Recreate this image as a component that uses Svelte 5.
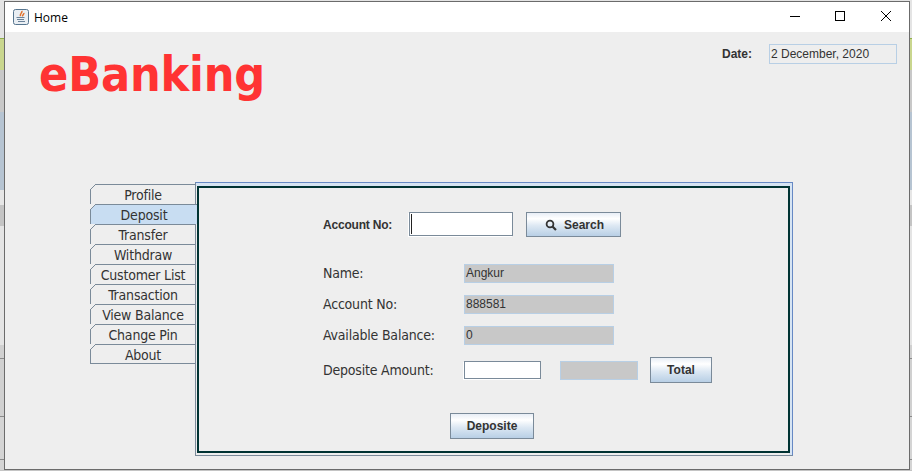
<script>
  const tabs = ['Profile', 'Deposit', 'Transfer', 'Withdraw', 'Customer List', 'Transaction', 'View Balance', 'Change Pin', 'About'];
  const selected = 'Deposit';
  const details = [
    { label: 'Name:', value: 'Angkur' },
    { label: 'Account No:', value: '888581' },
    { label: 'Available Balance:', value: '0' }
  ];
</script>

<div class="desktop">
  <div class="window">
    <div class="titlebar">
      <svg class="app-icon" width="16" height="16" viewBox="0 0 16 16">
        <rect x="0.5" y="0.5" width="15" height="15" rx="2" fill="#e9eef3" stroke="#56758f" />
        <path d="M8.800 1.800c1.200 1.800-2.600 3-1.200 5.400M10.800 4c.6 1.200-1.800 1.800-1.100 3.400" fill="none" stroke="#e2702a" stroke-width="1.500" />
        <path d="M3.500 8.500h8M4 10.500h7M5 12.500h7" stroke="#6a8299" stroke-width="1" />
      </svg>
      <span class="title">Home</span>
      <div class="controls">
        <svg width="102" height="12" viewBox="0 0 102 12">
          <path d="M0 5.500h10" stroke="#000" />
          <rect x="45.500" y="0.500" width="9" height="9" fill="none" stroke="#000" />
          <path d="M91 0l10 10M101 0l-10 10" stroke="#000" />
        </svg>
      </div>
    </div>

    <div class="content">
      <header class="top">
        <h1>eBanking</h1>
        <div class="date">
          <strong>Date:</strong>
          <div class="date-field">2 December, 2020</div>
        </div>
      </header>

      <div class="tabbed">
        <div class="tabs">
          {#each tabs as tab}
            <div class="tab" class:selected={tab === selected}>{tab}</div>
          {/each}
        </div>

        <div class="panel">
          <div class="form">
            <div class="search-row">
              <strong class="search-label">Account No:</strong>
              <div class="input search-input"><span class="caret"></span></div>
              <button class="btn search-btn">
                <svg width="12" height="12" viewBox="0 0 12 12">
                  <circle cx="5" cy="5" r="3.400" fill="none" stroke="#333" stroke-width="1.800" />
                  <path d="M7.500 7.500l3.500 3.500" stroke="#333" stroke-width="2.200" />
                </svg>
                Search
              </button>
            </div>

            <div class="details">
              {#each details as row}
                <div class="detail-row">
                  <span class="label">{row.label}</span>
                  <div class="readonly">{row.value}</div>
                </div>
              {/each}
            </div>

            <div class="amount-row">
              <span class="label">Deposite Amount:</span>
              <div class="input amount-input"></div>
              <div class="readonly total-field"></div>
              <button class="btn total-btn">Total</button>
            </div>

            <button class="btn deposit-btn">Deposite</button>
          </div>
        </div>
      </div>
    </div>
  </div>
</div>

<style>
  :global(body) {
    margin: 0;
    overflow: hidden;
  }

  .desktop {
    width: 912px;
    height: 471px;
    box-sizing: border-box;
    padding: 1px 2px 1px 4px;
    font-family: "Liberation Sans", Arial, sans-serif;
    color: #333;
    background: linear-gradient(
      to bottom,
      #e4e4e4 0 38px,
      #8fb04a 38px 39px,
      #c9d68e 39px 70px,
      #c8c8c8 70px 112px,
      #b6c4d2 112px 190px,
      #e6e6e6 190px 205px,
      #c4c4c4 205px 226px,
      #e4e4e4 226px 345px,
      #d0d0d0 345px 358px,
      #8a8a8a 358px 359px,
      #d0d0d0 359px 416px,
      #8a8a8a 416px 417px,
      #d4d4d4 417px 459px,
      #8a8a8a 459px 460px,
      #d4d4d4 460px 470px,
      #c4c4c4 470px 471px
    );
  }

  .window {
    width: 906px;
    height: 469px;
    box-sizing: border-box;
    border: 1px solid #6b6b6b;
    background: #eeeeee;
    display: flex;
    flex-direction: column;
  }

  .titlebar {
    height: 30px;
    flex: none;
    background: #fff;
    display: flex;
    align-items: center;
    padding-left: 8px;
    font-family: "Open Sans", sans-serif;
    font-size: 12px;
    color: #000;
  }

  .app-icon {
    margin-right: 5px;
  }

  .controls {
    margin-left: auto;
    margin-right: 17px;
    display: flex;
  }

  .controls svg {
    display: block;
  }

  .content {
    flex: 1;
    display: flex;
    flex-direction: column;
  }

  .top {
    height: 150px;
    flex: none;
    display: flex;
    justify-content: space-between;
    align-items: flex-start;
  }

  h1 {
    margin: 9px 0 0 34px;
    font-family: "DejaVu Sans", sans-serif;
    font-stretch: condensed;
    font-size: 48px;
    font-weight: 700;
    line-height: 66px;
    letter-spacing: -0.15px;
    color: #ff3333;
  }

  .date {
    margin: 12px 12px 0 0;
    display: flex;
    align-items: center;
    font-size: 12px;
  }

  .date strong {
    margin-right: 17px;
  }

  .date-field {
    width: 128px;
    height: 20px;
    box-sizing: border-box;
    border: 1px solid #b8cfe5;
    padding: 1px 0 0 1px;
    line-height: 17px;
  }

  .tabbed {
    display: flex;
    margin-left: 85px;
    align-items: flex-start;
  }

  .tabs {
    margin-top: 2px;
    width: 105px;
    flex: none;
    border-bottom: 1px solid #7a8a99;
    position: relative;
    z-index: 1;
  }

  .tab {
    position: relative;
    height: 20px;
    box-sizing: border-box;
    border-top: 1px solid #7a8a99;
    border-left: 1px solid #7a8a99;
    text-align: center;
    font-family: "DejaVu Sans", sans-serif;
    font-stretch: condensed;
    font-size: 14px;
    line-height: 20px;
    letter-spacing: -0.2px;
  }

  .tab::before {
    content: '';
    position: absolute;
    left: -1px;
    top: -1px;
    width: 6px;
    height: 6px;
    background: linear-gradient(135deg, #eeeeee 0 42%, #7a8a99 42% 56%, transparent 56%);
  }

  .tab:last-child {
    height: 19px;
  }

  .tab.selected {
    background: #c8ddf2;
    margin-right: -2px;
  }

  .panel {
    width: 598px;
    height: 274px;
    flex: none;
    box-sizing: border-box;
    border: 1px solid #7a8a99;
    border-top-color: #6688c4;
    border-right-color: #6688c4;
    padding: 3px 2px 2px 1px;
    background: linear-gradient(#d6e4f3, #d6e4f3) right / 3px 100% no-repeat,
      linear-gradient(#d6e4f3, #d6e4f3) top / 100% 3px no-repeat, #eeeeee;
  }

  .form {
    height: 100%;
    box-sizing: border-box;
    border: 2px solid #003333;
    background: #eeeeee;
    padding: 24px 0 0 124px;
  }

  .search-row,
  .amount-row,
  .detail-row {
    display: flex;
    align-items: center;
  }

  .search-label {
    width: 86px;
    flex: none;
    font-size: 12px;
    letter-spacing: -0.2px;
  }

  .input {
    box-sizing: border-box;
    background: #fff;
    border: 1px solid #7a8a99;
    box-shadow: -1px 1px 0 #fff;
  }

  .search-input {
    width: 104px;
    height: 24px;
    margin-right: 13px;
    padding: 1px;
    align-self: flex-start;
  }

  .caret {
    display: block;
    width: 1px;
    height: 20px;
    background: #222;
  }

  .btn {
    box-sizing: border-box;
    border: 1px solid #7a8a99;
    padding: 0;
    font-family: inherit;
    font-size: 12px;
    font-weight: 700;
    color: #333;
    background: linear-gradient(to bottom, #e8eef6 0, #ffffff 25%, #dde8f3 55%, #b8cfe5 100%);
  }

  .search-btn {
    width: 95px;
    height: 25px;
    display: flex;
    align-items: center;
    justify-content: center;
    gap: 7px;
    padding-left: 2px;
  }

  .details {
    margin-top: 27px;
    display: flex;
    flex-direction: column;
    gap: 12px;
  }

  .label {
    width: 141px;
    flex: none;
    font-family: "DejaVu Sans", sans-serif;
    font-stretch: condensed;
    font-size: 14px;
    line-height: 17px;
    letter-spacing: -0.2px;
  }

  .readonly {
    box-sizing: border-box;
    width: 150px;
    height: 19px;
    background: #c8c8c8;
    border: 1px solid #b8cfe5;
    padding-left: 1px;
    font-size: 12px;
    line-height: 17px;
  }

  .amount-row {
    margin-top: 12px;
    height: 26px;
  }

  .amount-input {
    width: 77px;
    height: 18px;
    margin-right: 19px;
  }

  .total-field {
    width: 78px;
    margin-right: 12px;
  }

  .total-btn {
    width: 62px;
    height: 26px;
  }

  .deposit-btn {
    display: block;
    width: 84px;
    height: 26px;
    margin: 30px 0 0 127px;
  }
</style>
